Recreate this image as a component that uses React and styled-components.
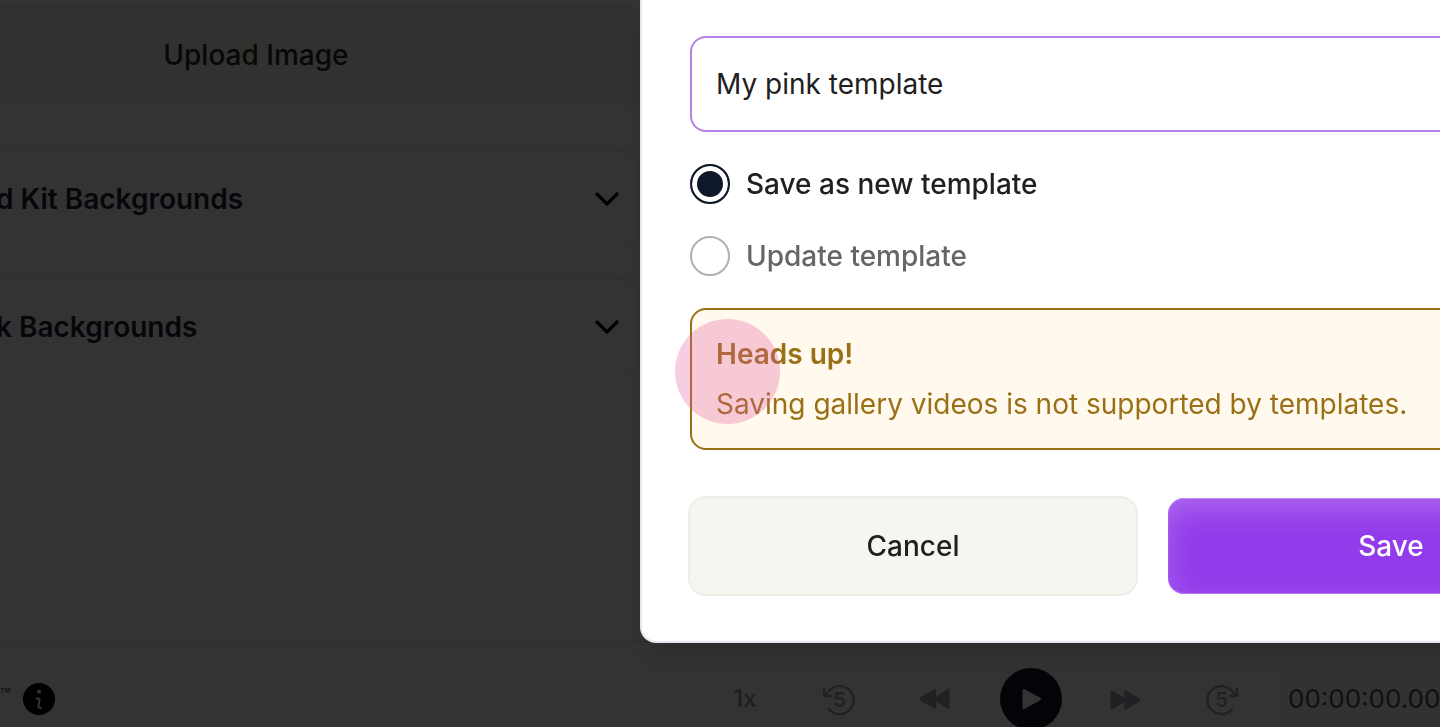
import React, { useState } from "react";
import styled, { createGlobalStyle } from "styled-components";
import { ChevronDown } from "lucide-react";

const GlobalStyle = createGlobalStyle`
  *,
  *::before,
  *::after {
    box-sizing: border-box;
  }

  body {
    margin: 0;
    overflow: hidden;
    background: #fff;
    font-family: Inter, "Liberation Sans", sans-serif;
    font-size: 28px;
    font-optical-sizing: none;
    line-height: 40px;
    color: #20201d;
  }

  button,
  input {
    font: inherit;
    color: inherit;
  }
`;

const Page = styled.div`
  display: flex;
  flex-direction: column;
  height: 100vh;
  overflow: hidden;
`;

const Sidebar = styled.aside`
  display: flex;
  flex: 1;
  flex-direction: column;
  gap: 28px;
  width: 44.5%;
  min-height: 0;
  padding-top: 5px;
`;

const UploadButton = styled.button`
  height: 100px;
  margin-bottom: 16px;
  padding: 0 128px 0 0;
  border: 1px solid #ecece4;
  border-left: none;
  border-radius: 0 16px 16px 0;
  background: #f5f5ef;
  color: #2a2a26;
  font-weight: 500;
`;

const Section = styled.button`
  display: flex;
  justify-content: space-between;
  align-items: center;
  height: 100px;
  padding: 0 12px 0 0;
  border: 2px solid #f0f0ea;
  border-left: none;
  border-radius: 0 24px 24px 0;
  background: #fff;
  color: #1e253b;
  font-weight: 600;

  svg {
    color: #000;
  }
`;

const SectionTitle = styled.span`
  margin-left: -4px;
`;

const Footer = styled.footer`
  display: flex;
  flex: none;
  justify-content: space-between;
  align-items: flex-start;
  height: 86px;
  padding-top: 26px;
  border-top: 1px solid #e5e5e5;
`;

const Brand = styled.div`
  display: flex;
  align-items: center;
  gap: 12px;
  height: 62px;
`;

const Trademark = styled.span`
  padding-bottom: 8px;
  color: #64748b;
  font-size: 17px;
  font-weight: 600;
  line-height: 16px;
`;

const Controls = styled.div`
  display: flex;
  align-items: center;
  height: 62px;
`;

const ControlButton = styled.button`
  display: flex;
  justify-content: center;
  align-items: center;
  width: ${(props) => (props.$narrow ? "92px" : "96px")};
  height: 62px;
  padding: 0;
  border: none;
  background: none;
  color: ${(props) => (props.$narrow ? "#96968c" : "#9ca3af")};
  font-size: 24px;
  font-weight: 500;
`;

const PlayCircle = styled.span`
  display: flex;
  justify-content: center;
  align-items: center;
  width: 62px;
  height: 62px;
  border-radius: 50%;
  background: #0f172a;
`;

const TimeCode = styled.div`
  width: 164px;
  height: 54px;
  margin-left: 5px;
  padding-left: 12px;
  overflow: hidden;
  border-radius: 12px 0 0 12px;
  background: #f8f8f8;
  color: #475569;
  font-size: 26px;
  line-height: 54px;
  white-space: nowrap;
`;

const Overlay = styled.div`
  position: fixed;
  inset: 0;
  display: grid;
  grid-template-columns: minmax(0, 4fr) minmax(0, 5fr);
  align-items: start;
  overflow: hidden;
  background: rgba(0, 0, 0, 0.8);
`;

const Modal = styled.form`
  display: flex;
  grid-column: 2;
  flex-direction: column;
  gap: 32px;
  width: 1024px;
  padding: 36px 48px 47px;
  border: 2px solid #e2e8f0;
  border-top: none;
  border-radius: 0 0 16px 16px;
  background: #fff;
  box-shadow: 0 20px 30px -6px rgba(0, 0, 0, 0.15);
`;

const NameInput = styled.input`
  width: 100%;
  height: 96px;
  padding: 0 24px;
  border: 2px solid #b283e4;
  border-radius: 16px;
  outline: none;
  background: #fff;
`;

const Option = styled.label`
  display: flex;
  align-items: center;
  gap: 16px;
  height: 40px;
  color: ${(props) => (props.$active ? "#20201d" : "#666663")};
  font-weight: 500;
`;

const Radio = styled.input`
  appearance: none;
  width: 40px;
  height: 40px;
  margin: 0;
  border: 2px solid #afb1b6;
  border-radius: 50%;
  background: #fff;

  &:checked {
    border-color: #0f172a;
    background: #0f172a;
    box-shadow: inset 0 0 0 5px #fff;
  }
`;

const Alert = styled.div`
  position: relative;
  display: flex;
  flex-direction: column;
  gap: 10px;
  padding: 24px;
  border: 2px solid #9a7016;
  border-radius: 16px;
  background: #fff9ee;
  color: #9a7016;
`;

const AlertTitle = styled.strong`
  font-weight: 600;
`;

const TapMarker = styled.span`
  position: absolute;
  top: 9px;
  left: -17px;
  width: 105px;
  height: 105px;
  border-radius: 50%;
  background: rgba(225, 88, 156, 0.3);
`;

const Actions = styled.div`
  display: flex;
  gap: 32px;
  padding-top: 16px;
`;

const ActionButton = styled.button`
  flex: 1;
  height: 96px;
  border: none;
  border-radius: 16px;
  background: ${(props) => (props.$primary ? "#933bea" : "#f5f6f0")};
  box-shadow: ${(props) =>
    props.$primary
      ? "inset 0 1px 1px #c08cf4, inset 0 -1px 1px #b47af2, inset 0 12px 28px rgba(255, 255, 255, 0.22)"
      : "0 0 0 2px #edeee8"};
  color: ${(props) => (props.$primary ? "#fff" : "#20201d")};
  font-weight: 500;
`;

const InfoIcon = () => (
  <svg width="32" height="32" viewBox="0 0 32 32" aria-hidden="true">
    <circle cx="16" cy="16" r="16" fill="#000" />
    <circle cx="16" cy="8.5" r="2" fill="#fff" />
    <path
      d="M13.5 15.5h1.2c1.6 0 2.2 1 1.8 2.5l-1 4.2c-.4 1.8.3 2.8 2.5 2.6"
      fill="none"
      stroke="#fff"
      strokeWidth="2"
      strokeLinecap="round"
    />
  </svg>
);

const SeekIcon = ({ forward }) => (
  <svg
    width="32"
    height="32"
    viewBox={forward ? "0 0 32 32" : "1 0 32 32"}
    overflow="visible"
    aria-hidden="true"
  >
    <g
      transform={forward ? "matrix(-1 0 0 1 32 0)" : undefined}
      fill="none"
      stroke="currentColor"
      strokeWidth="2.4"
      strokeLinecap="round"
      strokeLinejoin="round"
    >
      <path d="M2.4 12.6 7 8A14 14 0 1 1 7.1 26.4" />
      <path d="M2 5.5v7.5h7" />
    </g>
    <text
      x={forward ? 14.5 : 17.5}
      y="24"
      textAnchor="middle"
      fill="currentColor"
      fontSize="20"
      fontWeight="600"
    >
      5
    </text>
  </svg>
);

const SkipIcon = ({ forward }) => (
  <svg
    width="30"
    height="22"
    viewBox={forward ? "2 -2 30 22" : "0 -1 30 22"}
    overflow="visible"
    aria-hidden="true"
  >
    <g
      transform={forward ? "matrix(-1 0 0 1 30 0)" : undefined}
      fill="currentColor"
      stroke="currentColor"
      strokeWidth="2"
      strokeLinejoin="round"
    >
      <path d="M15 1v18L1.8 11.4a1.6 1.6 0 0 1 0-2.8Z" />
      <path d="M28.5 1v18L15.8 11.4a1.6 1.6 0 0 1 0-2.8Z" />
    </g>
  </svg>
);

const PlayIcon = () => (
  <svg width="24" height="24" viewBox="0 0 24 24" aria-hidden="true">
    <path
      d="M5 3.5v17L20.5 12Z"
      fill="#fff"
      stroke="#fff"
      strokeWidth="3"
      strokeLinejoin="round"
    />
  </svg>
);

const sections = ["d Kit Backgrounds", "k Backgrounds"];

const options = [
  { value: "new", label: "Save as new template" },
  { value: "update", label: "Update template" },
];

const SaveTemplateModal = () => {
  const [name, setName] = useState("My pink template");
  const [mode, setMode] = useState("new");

  return (
    <Modal onSubmit={(e) => e.preventDefault()}>
      <NameInput
        type="text"
        aria-label="Template name"
        value={name}
        onChange={(e) => setName(e.target.value)}
      />
      {options.map(({ value, label }) => (
        <Option key={value} htmlFor={value} $active={mode === value}>
          <Radio
            type="radio"
            id={value}
            name="mode"
            checked={mode === value}
            onChange={() => setMode(value)}
          />
          {label}
        </Option>
      ))}
      <Alert role="alert">
        <AlertTitle>Heads up!</AlertTitle>
        <span>Saving gallery videos is not supported by templates.</span>
        <TapMarker />
      </Alert>
      <Actions>
        <ActionButton type="button">Cancel</ActionButton>
        <ActionButton type="submit" $primary>
          Save
        </ActionButton>
      </Actions>
    </Modal>
  );
};

const App = () => (
  <>
    <GlobalStyle />
    <Page>
      <Sidebar>
        <UploadButton type="button">Upload Image</UploadButton>
        {sections.map((title) => (
          <Section key={title} type="button">
            <SectionTitle>{title}</SectionTitle>
            <ChevronDown size={40} />
          </Section>
        ))}
      </Sidebar>
      <Footer>
        <Brand>
          <Trademark>™</Trademark>
          <InfoIcon />
        </Brand>
        <Controls>
          <ControlButton type="button" $narrow>
            1x
          </ControlButton>
          <ControlButton type="button" aria-label="Back 5 seconds">
            <SeekIcon />
          </ControlButton>
          <ControlButton type="button" aria-label="Rewind">
            <SkipIcon />
          </ControlButton>
          <ControlButton type="button" aria-label="Play">
            <PlayCircle>
              <PlayIcon />
            </PlayCircle>
          </ControlButton>
          <ControlButton type="button" aria-label="Fast forward">
            <SkipIcon forward />
          </ControlButton>
          <ControlButton type="button" aria-label="Forward 5 seconds">
            <SeekIcon forward />
          </ControlButton>
          <TimeCode>00:00:00.000</TimeCode>
        </Controls>
      </Footer>
    </Page>
    <Overlay>
      <SaveTemplateModal />
    </Overlay>
  </>
);

export default App;
